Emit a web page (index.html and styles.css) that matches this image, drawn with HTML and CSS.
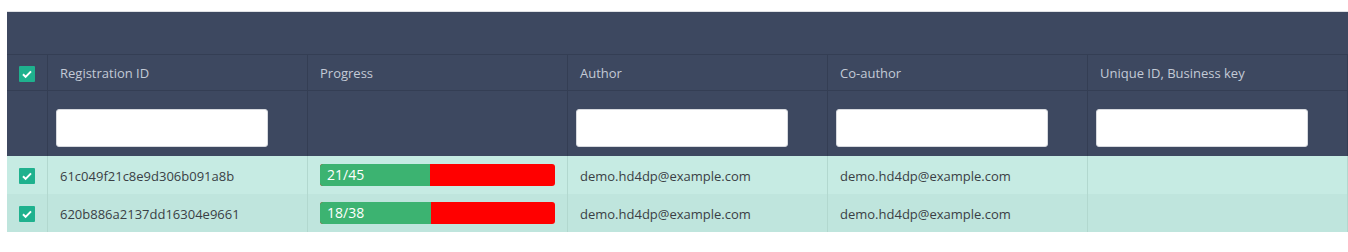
FILE: index.html
```html
<!DOCTYPE html>
<html>
<head>
<meta charset="utf-8">
<link rel="stylesheet" href="styles.css">
</head>
<body>
<div class="panel">
  <div class="topband"></div>
  <table class="grid">
    <colgroup>
      <col class="c-check"><col class="c-col"><col class="c-col"><col class="c-col"><col class="c-col"><col class="c-col">
    </colgroup>
    <thead>
      <tr class="head">
        <th class="chk"><span class="cb"><svg viewBox="0 0 16 16" width="16" height="16"><path d="M4 8.3l2.6 2.6L12 5.4" fill="none" stroke="#fff" stroke-width="2"/></svg></span></th>
        <th>Registration ID</th>
        <th>Progress</th>
        <th>Author</th>
        <th>Co-author</th>
        <th>Unique ID, Business key</th>
      </tr>
      <tr class="filters">
        <th class="chk"></th>
        <th><input type="text" class="filter"></th>
        <th></th>
        <th><input type="text" class="filter"></th>
        <th><input type="text" class="filter"></th>
        <th><input type="text" class="filter"></th>
      </tr>
    </thead>
    <tbody>
      <tr class="row odd">
        <td class="chk"><span class="cb"><svg viewBox="0 0 16 16" width="16" height="16"><path d="M4 8.3l2.6 2.6L12 5.4" fill="none" stroke="#fff" stroke-width="2"/></svg></span></td>
        <td>61c049f21c8e9d306b091a8b</td>
        <td><div class="bar"><div class="done" style="width:46.67%">21/45</div></div></td>
        <td>demo.hd4dp@example.com</td>
        <td>demo.hd4dp@example.com</td>
        <td></td>
      </tr>
      <tr class="row even">
        <td class="chk"><span class="cb"><svg viewBox="0 0 16 16" width="16" height="16"><path d="M4 8.3l2.6 2.6L12 5.4" fill="none" stroke="#fff" stroke-width="2"/></svg></span></td>
        <td>620b886a2137dd16304e9661</td>
        <td><div class="bar"><div class="done" style="width:47.37%">18/38</div></div></td>
        <td>demo.hd4dp@example.com</td>
        <td>demo.hd4dp@example.com</td>
        <td></td>
      </tr>
    </tbody>
  </table>
</div>
</body>
</html>
```
FILE: styles.css
```css
* { box-sizing: border-box; }
html, body { margin: 0; padding: 0; background: #fff; }
body {
  font-family: "Open Sans", "Noto Sans", sans-serif;
  font-size: 13px;
  padding: 11px 0 0 7px;
}
.panel {
  width: 1341px;
  border-top: 1px solid #dfe1e5;
  background: #3d4860;
}
.topband { height: 42px; }
.grid {
  width: 1341px;
  border-collapse: separate;
  border-spacing: 0;
  table-layout: fixed;
}
.c-check { width: 41px; }
.c-col { width: 260px; }
.grid th, .grid td {
  padding: 0 12px;
  text-align: left;
  vertical-align: middle;
  font-weight: normal;
  border-right: 1px solid #343e54;
}
.head th {
  height: 36px;
  color: #c3cad6;
  border-top: 1px solid #343e54;
  padding-top: 1px;
}
.filters th {
  height: 66px;
  border-top: 1px solid #343e54;
  padding-left: 8px;
}
.grid .chk { padding-left: 12px; padding-right: 0; }
.cb {
  display: block;
  width: 16px;
  height: 16px;
  background: #1fb18e;
  border-radius: 1px;
}
.cb svg { display: block; }
.head .cb { margin-top: 2px; }
.filter {
  display: block;
  width: 212px;
  height: 38px;
  border: 1px solid #d6d9de;
  border-radius: 3px;
  background: #fff;
  margin-top: 8px;
  padding: 0;
}
.row td {
  height: 38px;
  color: #3a3f45;
  border-right: 1px solid #b2d8cf;
  padding-top: 1px;
}
.row.odd td { background: #c6ebe3; }
.row.even td { background: #bfe5dd; }
.bar {
  height: 22px;
  background: #ff0000;
  border-radius: 3px;
  overflow: hidden;
  display: flex;
  margin-top: -1px;
}
.done {
  background: #3cb371;
  color: #fff;
  font-size: 14px;
  line-height: 22px;
  padding-left: 7px;
}
```
